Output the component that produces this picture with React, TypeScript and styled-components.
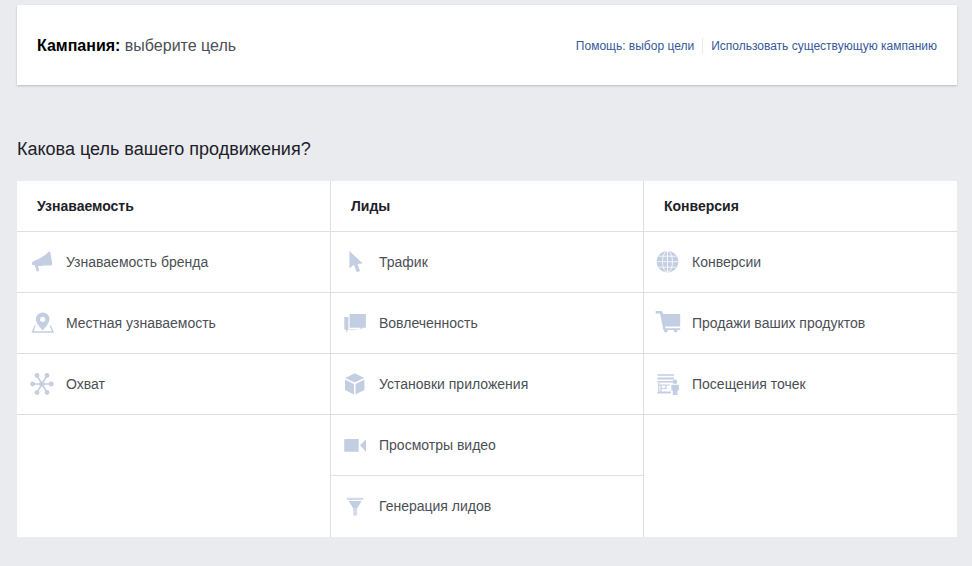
import React from "react";
import styled, { createGlobalStyle } from "styled-components";

const ICON = "#c4cee2";

const GlobalStyle = createGlobalStyle`
  html, body {
    margin: 0;
    background: #e9ebee;
    font-family: "Liberation Sans", Arial, sans-serif;
  }
`;

const Svg = ({ children }: { children: React.ReactNode }) => (
  <IconSvg viewBox="0 0 24 24" fill={ICON}>
    {children}
  </IconSvg>
);

const BrandIcon = () => (
  <Svg>
    <path d="M18.600 1.800c-3 3.600-8.600 6.600-12.800 8.400L2.600 11.800c-1 .7-.9 2.900.3 3.400l2 .1 1.600 5.600c.3.900 2.300.8 2.600-.1l-.9-4.700c3.500-.6 8.400-.9 13-.6.900-.4 1.200-1.500.9-2.700L20.300 2.300c-.3-.7-1.100-1-1.700-.5z" />
  </Svg>
);

const PinIcon = () => (
  <Svg>
    <path
      fillRule="evenodd"
      d="M12.700 1.500c3.900 0 6.800 3 6.800 6.700 0 3.800-4.300 8.300-6.800 11.300-2.500-3-6.800-7.500-6.800-11.300 0-3.700 2.900-6.700 6.800-6.700zm0 4.200a2.600 2.600 0 1 0 0 5.200 2.600 2.600 0 0 0 0-5.200z"
    />
    <path d="M5.200 14.500 2.500 21h20.500l-2.700-6.500" fill="none" stroke={ICON} strokeWidth="1.400" />
  </Svg>
);

const ReachIcon = () => (
  <Svg>
    <g stroke={ICON} strokeWidth="1.500">
      <path d="M2.700 12h18.600M7 3.500l10 17M17 3.500l-10 17" />
    </g>
    <circle cx="12" cy="12" r="2.600" />
    <circle cx="2.700" cy="12" r="2.400" />
    <circle cx="21.300" cy="12" r="2.400" />
    <circle cx="7" cy="3.500" r="2.400" />
    <circle cx="17" cy="3.500" r="2.400" />
    <circle cx="7" cy="20.500" r="2.400" />
    <circle cx="17" cy="20.500" r="2.400" />
  </Svg>
);

const CursorIcon = () => (
  <Svg>
    <path d="M5.400 1v17.500l4.400-3.700 3 7.500 3.300-1.400-2.800-6.900 5.400-.6z" />
  </Svg>
);

const ChatIcon = () => (
  <Svg>
    <path d="M.3 6h13v12.500H4l-2 3v-3H.3z" />
    <path
      d="M5 2.300h17.500v15h-3.400l-3.100 2.700v-2.700H5z"
      stroke="#fff"
      strokeWidth="1.200"
    />
  </Svg>
);

const BoxIcon = () => (
  <Svg>
    <path d="M10.700 1.300 20.300 6l-9.600 4.600L1.100 6z" />
    <path d="M1 7.600l9 4.400v10.400l-9-4.400z" />
    <path d="M11.500 12l8.900-4.400V18l-8.900 4.400z" />
  </Svg>
);

const VideoIcon = () => (
  <Svg>
    <path d="M1 6h13.700v12.700H1a.8.800 0 0 1-.8-.8V6.800A.8.800 0 0 1 1 6z" />
    <path d="M16 12.300 22 6.300v12.500z" />
  </Svg>
);

const FunnelIcon = () => (
  <Svg>
    <path d="M3 3.700h16.300v2.300H3z" opacity=".75" />
    <path d="M4.500 7h13.300l-4.600 7H9.200z" />
    <path d="M9.200 14h3.900v7l-1.900 1-2-1z" opacity=".75" />
  </Svg>
);

const GlobeIcon = () => (
  <Svg>
    <circle cx="10.500" cy="11.700" r="10.800" />
    <g fill="none" stroke="#fff" strokeWidth=".8">
      <ellipse cx="10.500" cy="11.700" rx="5" ry="10.600" />
      <path d="M10.500 1v21.400M0 11.700h21M1.400 6.200h18.200M1.400 17.200h18.200" />
    </g>
  </Svg>
);

const CartIcon = () => (
  <Svg>
    <path d="M-1.300 0h5.200c.8 0 1.300.4 1.500 1.100L6 3h17.200v12.500H8.200v1.700h15v1.800H6.400L3 2.600h-4.300z" />
    <circle cx="8.800" cy="19.600" r="1.900" />
    <circle cx="18.600" cy="19.600" r="1.900" />
  </Svg>
);

const VisitsIcon = () => (
  <Svg>
    <path d="M.5 2.300h16.500v1.500H.5zM.5 5.500h16.500v2H.5zM.5 9h16.500v1.500H.5z" />
    <path
      d="M1.800 10.500v9.500h12M1.800 13h11M4 13v7M9 13v3.500H4"
      fill="none"
      stroke={ICON}
      strokeWidth="1.200"
    />
    <path d="M.3 20h13.500v1.500H.3z" />
    <circle cx="17.900" cy="9.700" r="2.300" />
    <path d="M14.400 12.700h7.400v5.800h-1.300V23h-4.700v-4.500h-1.400z" />
  </Svg>
);

type Objective = { label: string; icon: React.ReactNode };
type Column = { title: string; items: Objective[] };

const columns: Column[] = [
  {
    title: "Узнаваемость",
    items: [
      { label: "Узнаваемость бренда", icon: <BrandIcon /> },
      { label: "Местная узнаваемость", icon: <PinIcon /> },
      { label: "Охват", icon: <ReachIcon /> },
    ],
  },
  {
    title: "Лиды",
    items: [
      { label: "Трафик", icon: <CursorIcon /> },
      { label: "Вовлеченность", icon: <ChatIcon /> },
      { label: "Установки приложения", icon: <BoxIcon /> },
      { label: "Просмотры видео", icon: <VideoIcon /> },
      { label: "Генерация лидов", icon: <FunnelIcon /> },
    ],
  },
  {
    title: "Конверсия",
    items: [
      { label: "Конверсии", icon: <GlobeIcon /> },
      { label: "Продажи ваших продуктов", icon: <CartIcon /> },
      { label: "Посещения точек", icon: <VisitsIcon /> },
    ],
  },
];

const App = () => {
  return (
    <Page>
      <GlobalStyle />
      <CampaignCard>
        <CampaignTitle>
          <strong>Кампания:</strong> выберите цель
        </CampaignTitle>
        <CardLinks>
          <CardLink href="#">Помощь: выбор цели</CardLink>
          <LinkDivider />
          <CardLink href="#">Использовать существующую кампанию</CardLink>
        </CardLinks>
      </CampaignCard>
      <Question>Какова цель вашего продвижения?</Question>
      <ObjectiveTable>
        {columns.map((column) => (
          <ObjectiveColumn key={column.title}>
            <ColumnHeader>{column.title}</ColumnHeader>
            {column.items.map((item) => (
              <ObjectiveRow key={item.label}>
                {item.icon}
                <span>{item.label}</span>
              </ObjectiveRow>
            ))}
          </ObjectiveColumn>
        ))}
      </ObjectiveTable>
    </Page>
  );
};

const Page = styled.div`
  width: 972px;
  height: 566px;
  padding: 5px 15px 0 17px;
  box-sizing: border-box;
`;

const CampaignCard = styled.div`
  display: flex;
  align-items: center;
  justify-content: space-between;
  height: 80px;
  padding: 1px 20px 0;
  box-sizing: border-box;
  background: #fff;
  box-shadow: 0 1px 2px rgba(0, 0, 0, 0.2);
`;

const CampaignTitle = styled.div`
  font-size: 16px;
  color: #4b4f56;

  strong {
    color: #000;
    font-weight: bold;
  }
`;

const CardLinks = styled.div`
  display: flex;
  align-items: center;
`;

const CardLink = styled.a`
  font-size: 12px;
  color: #365899;
  text-decoration: none;
`;

const LinkDivider = styled.span`
  width: 1px;
  height: 16px;
  margin: 0 8px;
  background: #e9ebee;
`;

const Question = styled.h2`
  margin: 0;
  padding-top: 53px;
  height: 43px;
  font-size: 18px;
  line-height: 22px;
  font-weight: normal;
  color: #1d2129;
`;

const ObjectiveTable = styled.div`
  display: grid;
  grid-template-columns: 313px 313px 314px;
  background: #fff;
`;

const ObjectiveColumn = styled.div`
  & + & {
    border-left: 1px solid #dddfe2;
  }
`;

const ColumnHeader = styled.div`
  height: 51px;
  padding: 0 20px;
  box-sizing: border-box;
  display: flex;
  align-items: center;
  border-bottom: 1px solid #dddfe2;
  font-size: 14px;
  font-weight: bold;
  color: #1d2129;
`;

const ObjectiveRow = styled.div`
  height: 61px;
  padding: 0 0 0 13px;
  box-sizing: border-box;
  display: flex;
  align-items: center;
  gap: 11px;
  border-bottom: 1px solid #dddfe2;
  font-size: 14px;
  color: #4b4f56;

  ${ObjectiveColumn}:first-child & {
    gap: 12px;
  }

  ${ObjectiveColumn}:nth-child(2) &:last-child {
    border-bottom-color: transparent;
  }
`;

const IconSvg = styled.svg`
  width: 24px;
  height: 24px;
  flex: none;
  overflow: visible;
`;

export default App;
